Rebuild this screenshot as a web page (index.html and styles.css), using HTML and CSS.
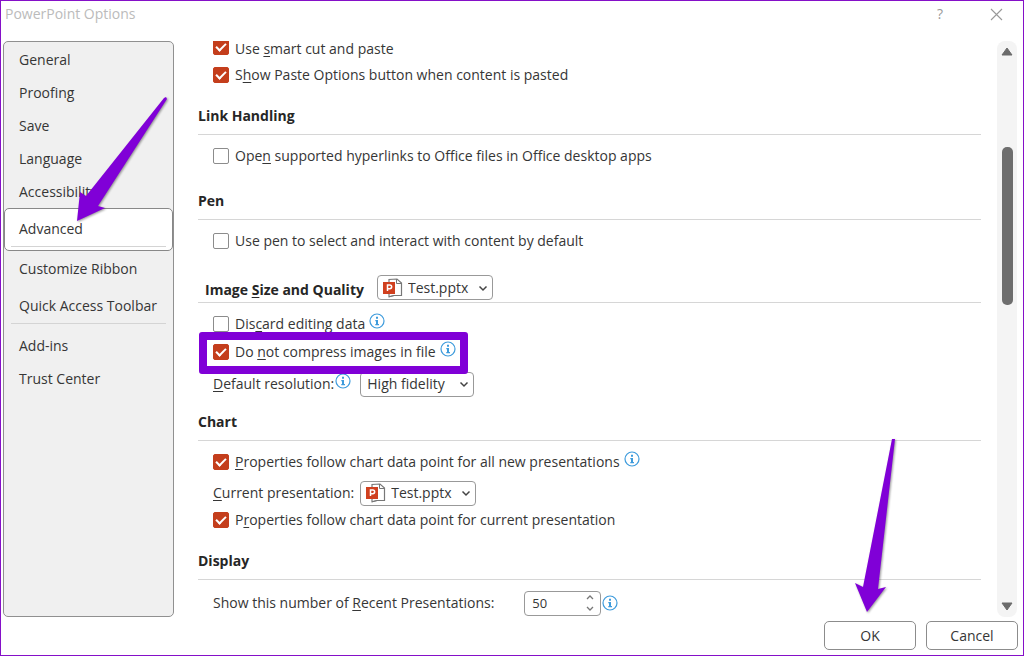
FILE: index.html
```html
<!DOCTYPE html>
<html lang="en">
<head>
<meta charset="utf-8">
<title>PowerPoint Options</title>
<link rel="stylesheet" href="styles.css">
</head>
<body>
<svg class="defs" width="0" height="0" aria-hidden="true">
  <symbol id="info" viewBox="0 0 16 16">
    <circle cx="8" cy="8" r="7" fill="#fff" stroke="#3d9bdc" stroke-width="1.2"/>
    <path d="M7 3.800h2v2H7zM6.300 7H9v4h1v1.200H6.300V11H7V8.200h-.7z" fill="#3d9bdc"/>
  </symbol>
  <symbol id="pptx" viewBox="0 0 20 20">
    <path d="M6 4.500V1.500l8-.5 4.500 4v12.500H11L6 18.800V15" fill="#fff" stroke="#777" stroke-width="1.200"/>
    <path d="M13.500 1v4.500h5" fill="none" stroke="#777"/>
    <path d="M6 18.800l5-1.300" stroke="#777"/>
    <rect x="0" y="4" width="12" height="12" fill="#d0401f"/>
    <path d="M4.500 13V7h2.300a1.800 1.800 0 0 1 0 3.700H4.500" fill="none" stroke="#fff" stroke-width="1.500"/>
  </symbol>
  <symbol id="chevron" viewBox="0 0 10 10">
    <path d="M1.500 3.500L5 7l3.500-3.500" fill="none" stroke="#444" stroke-width="1.500"/>
  </symbol>
</svg>
<div class="dialog">
  <header class="titlebar">
    <h1>PowerPoint Options</h1>
    <button class="tool" type="button" aria-label="Help">?</button>
    <button class="tool" type="button" aria-label="Close"><svg width="13" height="13" viewBox="0 0 13 13"><path d="M1 1l11 11M12 1L1 12" stroke="#999" stroke-width="1.100"/></svg></button>
  </header>
  <div class="body">
    <nav class="sidebar">
      <a href="#general">General</a>
      <a href="#proofing">Proofing</a>
      <a href="#save">Save</a>
      <a href="#language">Language</a>
      <a href="#accessibility">Accessibility</a>
      <a href="#advanced" class="active" aria-current="page">Advanced</a>
      <a href="#ribbon">Customize Ribbon</a>
      <a href="#toolbar" class="spaced">Quick Access Toolbar</a>
      <hr>
      <a href="#addins">Add-ins</a>
      <a href="#trust">Trust Center</a>
    </nav>
    <main class="options">
      <section>
        <div class="row first"><label><input type="checkbox" checked>Use <u>s</u>mart cut and paste</label></div>
        <div class="row"><label><input type="checkbox" checked>S<u>h</u>ow Paste Options button when content is pasted</label></div>
      </section>
      <section>
        <h2>Link Handling</h2>
        <div class="row"><label><input type="checkbox">Ope<u>n</u> supported hyperlinks to Office files in Office desktop apps</label></div>
      </section>
      <section>
        <h2>Pen</h2>
        <div class="row"><label><input type="checkbox">Use pen to select and interact with content by default</label></div>
      </section>
      <section>
        <div class="heading">
          <h2><label for="image-file">Image <u>S</u>ize and Quality</label></h2>
          <div class="select file"><svg class="doc"><use href="#pptx"/></svg><select id="image-file"><option>Test.pptx</option></select><svg class="chev"><use href="#chevron"/></svg></div>
        </div>
        <div class="row"><label><input type="checkbox">Dis<u>c</u>ard editing data</label><svg class="info raised"><use href="#info"/></svg></div>
        <div class="row"><div class="marked"><label><input type="checkbox" checked>Do <u>n</u>ot compress images in file</label><svg class="info raised"><use href="#info"/></svg></div></div>
        <div class="row tall"><label for="resolution"><u>D</u>efault resolution:</label><svg class="info raised tight"><use href="#info"/></svg><div class="select resolution"><select id="resolution"><option>High fidelity</option></select><svg class="chev"><use href="#chevron"/></svg></div></div>
      </section>
      <section class="chart">
        <h2>Chart</h2>
        <div class="row"><label><input type="checkbox" checked><span><u>P</u>roperties follow chart data point for all new presentations</span></label><svg class="info raised"><use href="#info"/></svg></div>
        <div class="row file-row"><label for="chart-file"><u>C</u>urrent presentation:</label><div class="select file"><svg class="doc"><use href="#pptx"/></svg><select id="chart-file"><option>Test.pptx</option></select><svg class="chev"><use href="#chevron"/></svg></div></div>
        <div class="row short"><label><input type="checkbox" checked><span>P<u>r</u>operties follow chart data point for current presentation</span></label></div>
      </section>
      <section class="display">
        <h2>Display</h2>
        <div class="row count"><label for="recent">Show this number of <u>R</u>ecent Presentations:</label><div class="spinner"><input id="recent" type="text" inputmode="numeric" value="50"><div class="steps"><button type="button" aria-label="Increase"><svg viewBox="0 0 8 5"><path d="M1 4l3-3 3 3" fill="none" stroke="#777" stroke-width="1.300"/></svg></button><button type="button" aria-label="Decrease"><svg viewBox="0 0 8 5"><path d="M1 1l3 3 3-3" fill="none" stroke="#777" stroke-width="1.300"/></svg></button></div></div><svg class="info"><use href="#info"/></svg></div>
      </section>
    </main>
    <div class="scrollbar" aria-hidden="true">
      <svg viewBox="0 0 12 9"><path d="M6 1L11 8H1z" fill="#6b6b6b" stroke="#6b6b6b" stroke-linejoin="round"/></svg>
      <div class="track"><div class="thumb"></div></div>
      <svg viewBox="0 0 12 9"><path d="M6 8L1 1h10z" fill="#6b6b6b" stroke="#6b6b6b" stroke-linejoin="round"/></svg>
    </div>
  </div>
  <footer class="actions">
    <button type="button">OK</button>
    <button type="button">Cancel</button>
  </footer>
  <svg class="arrow to-advanced" viewBox="0 0 92 126" aria-hidden="true"><path d="M90 1L91 3L22 110L29 112L1 125L4 96L10 100L88 2z"/></svg>
  <svg class="arrow to-ok" viewBox="0 0 34 176" aria-hidden="true"><path d="M38 1L41 1L24 151L32 149L13 174L1 145L9 149z"/></svg>
</div>
</body>
</html>
```
FILE: styles.css
```css
* { box-sizing: border-box; }

body {
  margin: 0;
  font: 14px/20px "Open Sans", "Noto Sans", sans-serif;
  color: #363636;
  background: #fff;
}

button, input, select { font: inherit; color: inherit; }
h1, h2 { margin: 0; font-size: inherit; }
u { text-underline-offset: 2px; }
svg { flex: none; }
.defs { position: absolute; }

.dialog {
  position: relative;
  display: flex;
  flex-direction: column;
  min-height: 100vh;
  border: 1px solid #8510c8;
}

.titlebar {
  display: flex;
  align-items: center;
  height: 40px;
  padding: 0 14px 14px 4px;
}
.titlebar h1 { flex: 1; font-weight: 400; color: #bbb; }
.tool {
  display: grid;
  place-items: center;
  width: 26px;
  height: 24px;
  margin-left: 30px;
  padding: 0;
  border: 0;
  background: none;
  color: #999;
}

.body {
  display: flex;
  flex: 1;
  padding: 0 6px 0 2px;
}

.sidebar {
  flex: none;
  width: 171px;
  padding-top: 1px;
  border: 1px solid #909090;
  border-radius: 5px;
  background: #f0f0f0;
}
.sidebar a {
  display: block;
  padding: 7px 15px 6px;
  color: inherit;
  text-decoration: none;
}
.sidebar .active {
  margin-bottom: 1px;
  padding: 10px 6px 3px;
  border: 1px solid #888;
  border-radius: 5px;
  background: #fff;
  text-indent: 8px;
}
.sidebar .active::after {
  content: "";
  display: block;
  margin-top: 7px;
  border-top: 1px solid #d4d4d4;
}
.sidebar .spaced { margin-top: 4px; }
.sidebar hr {
  margin: 1px 7px 5px;
  border: 0;
  border-top: 1px solid #d4d4d4;
}

.options {
  flex: 1;
  min-width: 0;
  margin: 0 16px 0 24px;
  overflow: hidden;
}
section { margin-bottom: 13px; }
section:first-child { margin-bottom: 9px; }
.chart { margin-top: -11px; }
section:last-child { margin-bottom: 0; }

h2 { font-weight: 700; color: #262626; }
section > h2 {
  height: 37px;
  margin-bottom: 7px;
  padding-top: 8px;
  border-bottom: 1px solid #d6d6d6;
}
.heading {
  display: flex;
  align-items: flex-end;
  gap: 13px;
  height: 35px;
  margin-bottom: 7px;
  padding: 0 0 2px 7px;
  border-bottom: 1px solid #d6d6d6;
}

.row {
  display: flex;
  align-items: center;
  height: 28px;
  padding-left: 15px;
}
.row label { display: flex; align-items: center; white-space: pre; }
.first { align-items: flex-start; height: 20px; line-height: 13px; }
.first input { margin-top: -2px; }
.tall { height: 36px; }
.file-row { height: 34px; gap: 6px; }
.short { height: 20px; }
.count { height: 26px; }
.display > h2 { margin-bottom: 10px; }

input[type="checkbox"] {
  appearance: none;
  display: grid;
  place-items: center;
  width: 16px;
  height: 16px;
  margin: 0 6px 0 0;
  border: 1px solid #8c8c8c;
  border-radius: 2px;
  background: #fff;
}
.first input[type="checkbox"] { margin-top: -2px; }
input[type="checkbox"]:checked { border-color: #c43e1c; background: #c43e1c; }
input[type="checkbox"]:checked::after {
  content: "";
  box-sizing: border-box;
  width: 10px;
  height: 6px;
  margin-bottom: 3px;
  border: solid #fff;
  border-width: 0 0 2px 2px;
  transform: rotate(-45deg);
}

.info { width: 16px; height: 16px; margin-left: 1px; }
.raised { margin: 0 0 6px 4px; }
.tight { margin-left: 1px; }

.marked { position: relative; display: flex; align-items: center; }
.marked::after {
  content: "";
  position: absolute;
  inset: -9px -12px -11px -14px;
  border: 8px solid #8000d7;
  border-radius: 3px;
}

.select { display: grid; align-items: center; height: 25px; }
.select > * { grid-area: 1 / 1; }
.select select {
  appearance: none;
  width: 100%;
  height: 25px;
  padding: 0 6px;
  border: 1px solid #999;
  border-radius: 4px;
  background: #fff;
}
.file { width: 116px; }
.select.file select { padding-left: 30px; }
.resolution { width: 114px; margin-left: 9px; }
.doc, .chev { z-index: 1; pointer-events: none; }
.doc { width: 20px; height: 20px; margin-left: 6px; }
.chev { justify-self: end; width: 10px; height: 10px; margin-right: 5px; }

.spinner {
  display: flex;
  width: 77px;
  height: 25px;
  margin-left: 30px;
  border: 1px solid #999;
  border-radius: 4px;
}
.spinner input {
  flex: 1;
  min-width: 0;
  padding: 0 7px;
  border: 0;
  background: none;
  font-size: 13px;
}
.steps { display: grid; width: 20px; }
.steps button {
  display: grid;
  place-items: center;
  padding: 0;
  border: 0;
  background: none;
}
.steps svg { width: 8px; height: 5px; }

.scrollbar {
  display: flex;
  flex-direction: column;
  align-items: center;
  flex: none;
  width: 20px;
  padding: 6px 0;
  border-radius: 8px;
  background: #f4f4f4;
}
.scrollbar svg { width: 12px; height: 9px; }
.track { flex: 1; padding-top: 91px; }
.thumb { width: 11px; height: 158px; border-radius: 5px; background: #6e6e6e; }

.actions {
  display: flex;
  justify-content: flex-end;
  gap: 10px;
  padding: 4px 5px 5px;
}
.actions button {
  width: 92px;
  height: 29px;
  padding: 0;
  border: 1px solid #8c8c8c;
  border-radius: 5px;
  background: #fff;
}

.arrow {
  position: absolute;
  overflow: visible;
  fill: #8000d7;
  filter: drop-shadow(1px 1px 1px #0006);
  pointer-events: none;
}
.to-advanced { left: 75px; top: 95px; width: 92px; height: 126px; }
.to-ok { right: 135px; bottom: 41px; width: 34px; height: 176px; }
```
